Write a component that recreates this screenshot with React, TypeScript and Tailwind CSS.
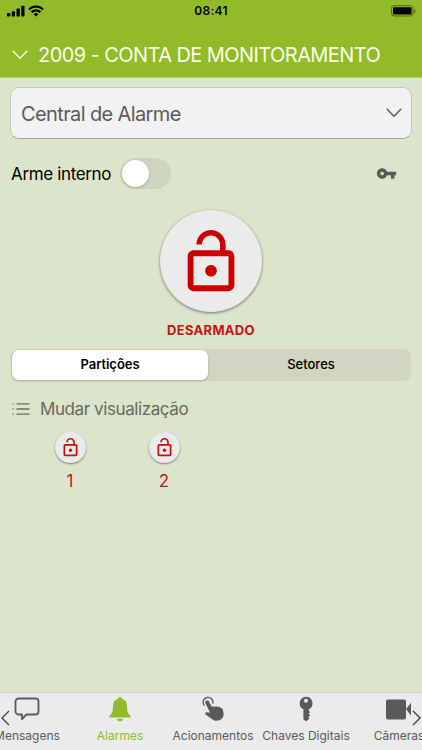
import type { ReactNode } from 'react';

const LockOpen = ({ className }: { className: string }) => (
  <svg viewBox="0 0 24 24" fill="currentColor" className={className}>
    <path d="M12 17c1.1 0 2-.9 2-2s-.9-2-2-2-2 .9-2 2 .9 2 2 2zm6-9h-1V6c0-2.76-2.24-5-5-5S7 3.24 7 6h1.9c0-1.71 1.39-3.1 3.1-3.1 1.71 0 3.1 1.39 3.1 3.1v2H6c-1.1 0-2 .9-2 2v10c0 1.1.9 2 2 2h12c1.1 0 2-.9 2-2V10c0-1.1-.9-2-2-2zm0 12H6V10h12v10z" />
  </svg>
);

const ChevronDown = ({ className }: { className: string }) => (
  <svg viewBox="0 0 16 10" fill="none" stroke="currentColor" strokeWidth="1.5" strokeLinecap="round" strokeLinejoin="round" className={className}>
    <path d="M1.2 1.3 8 8.2l6.8-6.9" />
  </svg>
);

const StatusBar = () => (
  <div className="h-[22px] flex items-center justify-between text-black">
    <div className="w-[100px] flex items-center gap-[3px] pl-[7px]">
      <svg viewBox="0 0 18 12" fill="currentColor" className="w-[18px] h-3">
        <rect x="0" y="8" width="3.3" height="3.5" rx="0.8" />
        <rect x="4.8" y="6.2" width="3.3" height="5.3" rx="0.8" />
        <rect x="9.5" y="3.6" width="3.3" height="7.9" rx="0.8" />
        <rect x="14.2" y="0.8" width="3.3" height="10.7" rx="0.8" />
      </svg>
      <svg viewBox="0 0 16 12" fill="none" stroke="currentColor" strokeWidth="2.1" className="w-4 h-3">
        <path d="M1 4.4a10 10 0 0 1 14 0" />
        <path d="M3.6 7.2a6.2 6.2 0 0 1 8.8 0" />
        <path d="M8 11.6 5.6 9.2a3.5 3.5 0 0 1 4.8 0z" fill="currentColor" stroke="none" />
      </svg>
    </div>
    <span className="text-[12px] font-semibold tracking-[0.3px]">08:41</span>
    <div className="w-[100px] flex justify-end pr-[6px]">
      <svg viewBox="0 0 25 12" className="w-[25px] h-3">
        <rect x="0.5" y="0.7" width="21.5" height="10.3" rx="2.6" fill="none" stroke="#4e6916" />
        <rect x="2" y="2.2" width="18.5" height="7.3" rx="1.2" fill="#000" />
        <path d="M23.2 4v4c1.6-.6 1.6-3.4 0-4z" fill="#4e6916" />
      </svg>
    </div>
  </div>
);

const Partition = ({ label }: { label: string }) => (
  <div className="w-[94px] flex flex-col items-center text-[#c21a15]">
    <div className="size-[31px] rounded-full bg-[#ebebeb] shadow-[0_1px_2px_rgba(0,0,0,0.45)] flex items-center justify-center">
      <LockOpen className="size-[21px] text-[#cc0d0d]" />
    </div>
    <span className="mt-[6px] text-[17px] leading-6">{label}</span>
  </div>
);

const Tab = ({ label, active, children }: { label: string; active?: boolean; children: ReactNode }) => (
  <div className={`w-[93px] shrink-0 flex flex-col items-center ${active ? 'text-[#8fbc28]' : 'text-[#5a5a5a]'}`}>
    <div className="h-8 flex items-center justify-center">{children}</div>
    <span className="mt-[3px] pl-px text-[12px] leading-4 whitespace-nowrap">{label}</span>
  </div>
);

const App = () => {
  return (
    <div className="w-[422px] h-[750px] overflow-hidden flex flex-col bg-[#dde4cc] font-[Inter,sans-serif]">
      {/* Header */}
      <header className="h-[78px] shrink-0 bg-[#91bb28] border-b border-[#b4cd70]">
        <StatusBar />
        <div className="h-[66px] flex items-center gap-[10px] pl-3 text-[#fbfde9]">
          <ChevronDown className="w-4 h-[10px]" />
          <h1 className="text-[20px] tracking-[-0.57px] whitespace-nowrap">2009 - CONTA DE MONITORAMENTO</h1>
        </div>
      </header>

      <main className="flex-1 flex flex-col px-[10px] pt-[9px]">
        <div className="h-[52px] shrink-0 flex items-center justify-between pl-[10px] pr-[9px] rounded-[9px] bg-[#f2f2f2] border border-[#c4c7bb] border-b-[#a3a59c] text-[#5a5a5a]">
          <span className="pt-px text-[20px] tracking-[-0.62px]">Central de Alarme</span>
          <ChevronDown className="w-4 h-[10px]" />
        </div>

        <div className="mt-[18px] h-8 flex items-center">
          <span className="pl-px pt-[3px] text-[17px] tracking-[-0.35px] text-black whitespace-nowrap">Arme interno</span>
          <div className="ml-[9px] w-[51px] h-[31px] rounded-full bg-[#cfd3c2] p-[2px]">
            <div className="size-[27px] rounded-full bg-white shadow-[0_1px_3px_rgba(0,0,0,0.2)]"></div>
          </div>
          <svg viewBox="0 0 24 24" fill="currentColor" className="ml-auto mr-[15px] size-[21px] text-[#5a5a5a]">
            <path d="M12.65 10C11.83 7.67 9.61 6 7 6c-3.31 0-6 2.69-6 6s2.69 6 6 6c2.61 0 4.83-1.67 5.65-4H17v4h4v-4h2v-4H12.65zM7 14c-1.1 0-2-.9-2-2s.9-2 2-2 2 .9 2 2-.9 2-2 2z" />
          </svg>
        </div>

        {/* Arm / disarm button */}
        <div className="mt-[21px] flex flex-col items-center">
          <div className="size-[102px] rounded-full bg-[#ebebeb] shadow-[0_1px_3px_rgba(0,0,0,0.5)] flex items-center justify-center pt-[2px]">
            <LockOpen className="size-[70px] text-[#cc0000]" />
          </div>
          <span className="mt-[9px] text-[13px] leading-[18px] font-bold tracking-[0.3px] text-[#c4160f]">DESARMADO</span>
        </div>

        <div className="mt-[10px] mx-px h-8 rounded-[8px] bg-[#d1d5c2] flex p-[1px] text-[13px] text-black">
          <div className="w-[196px] rounded-[7px] bg-white shadow-[0_1px_3px_rgba(0,0,0,0.2)] flex items-center justify-center font-semibold tracking-[-0.05px]">Partições</div>
          <div className="flex-1 flex items-center justify-center pl-[4px] font-medium">Setores</div>
        </div>

        <div className="mt-4 h-6 flex items-center gap-[10px] pl-[2px] text-[#666a60]">
          <svg viewBox="0 0 18 14" fill="none" stroke="currentColor" strokeWidth="1.3" strokeLinecap="round" className="w-[18px] h-[14px]">
            <path d="M1 1.8h.2M1 7h.2M1 12.2h.2M5 1.8h12M5 7h12M5 12.2h12" />
          </svg>
          <span className="text-[17px] leading-6 tracking-[-0.41px]">Mudar visualização</span>
        </div>

        <div className="mt-[11px] flex pl-[13px]">
          <Partition label="1" />
          <Partition label="2" />
        </div>
      </main>

      {/* Tab bar */}
      <nav className="relative h-[58px] shrink-0 flex -mx-5 border-t border-[#cfd2c6] bg-[#ebebeb]">
        <Tab label="Mensagens">
          <svg viewBox="0 0 26 26" fill="none" stroke="currentColor" strokeWidth="1.8" strokeLinejoin="round" className="size-[26px]">
            <path d="M4.5 2.5h17a3 3 0 0 1 3 3v10a3 3 0 0 1-3 3h-9L8 23v-4.500H4.500a3 3 0 0 1-3-3v-10a3 3 0 0 1 3-3z" />
          </svg>
        </Tab>
        <Tab label="Alarmes" active>
          <svg viewBox="0 0 22 26" fill="currentColor" className="w-[22px] h-[26px]">
            <path d="M11 1c1 0 1.800.700 2 1.700 3.200.9 5 3.600 5 7.300 0 6 1.300 8 3.300 9.500.9.800.5 2-.8 2H1.500c-1.300 0-1.700-1.200-.8-2C2.700 18 4 16 4 10c0-3.700 1.800-6.400 5-7.300C9.200 1.700 10 1 11 1zM7.500 22.700c.5 1.600 1.800 2.600 3.500 2.600s3-1 3.500-2.600z" />
          </svg>
        </Tab>
        <Tab label="Acionamentos">
          <svg viewBox="0 0 26 26" fill="currentColor" className="size-[26px]">
            <path d="M4.200 9.600a5 5 0 1 1 8.600-1.800" fill="none" stroke="currentColor" strokeWidth="1.400" />
            <path d="M6.200 4.700c1.100-.6 2.300-.2 2.800.8l3 5.600c.6-1.200 2.200-1.200 2.800-.1.800-1.100 2.300-.9 2.800.2 1-.8 2.300-.4 2.700.7.900-.3 1.800.1 2.200 1l.8 3c1.100 3.700-.7 7.200-4.100 8.400-2.800 1-5.700.3-7.700-1.600l-5.700-3.900c-1.300-1-.5-2.900 1.200-2.600l3.200.5L5.400 7.300c-.5-1-.2-2.100.8-2.600z" />
          </svg>
        </Tab>
        <Tab label="Chaves Digitais">
          <svg viewBox="0 0 14 26" fill="currentColor" className="w-[14px] h-[26px]">
            <path fillRule="evenodd" d="M7 .8a6.600 6.600 0 0 1 2.800 12.500v1.500l1.300 1.400-1.500 1.500 1.600 1.700-1.600 1.600.5 1.800L7.200 25.500l-2.800-2.200v-10A6.600 6.600 0 0 1 7 .8zm0 2a2 2 0 1 0 0 4 2 2 0 0 0 0-4z" />
          </svg>
        </Tab>
        <Tab label="Câmeras">
          <svg viewBox="0 0 25 21" fill="currentColor" className="w-[25px] h-[21px]">
            <path d="M2 .5h16a2 2 0 0 1 2 2v16a2 2 0 0 1-2 2H2a2 2 0 0 1-2-2v-16a2 2 0 0 1 2-2zM20 10l5-6.300v13z" />
          </svg>
        </Tab>
        <svg viewBox="0 0 10 16" fill="none" stroke="#444" strokeWidth="1.400" className="absolute left-[20px] top-[17px] w-[10px] h-4">
          <path d="M9 1 2 8l7 7" />
        </svg>
        <svg viewBox="0 0 10 16" fill="none" stroke="#444" strokeWidth="1.400" className="absolute right-[20px] top-[17px] w-[10px] h-4">
          <path d="m1 1 7 7-7 7" />
        </svg>
      </nav>
    </div>
  );
};

export default App;
